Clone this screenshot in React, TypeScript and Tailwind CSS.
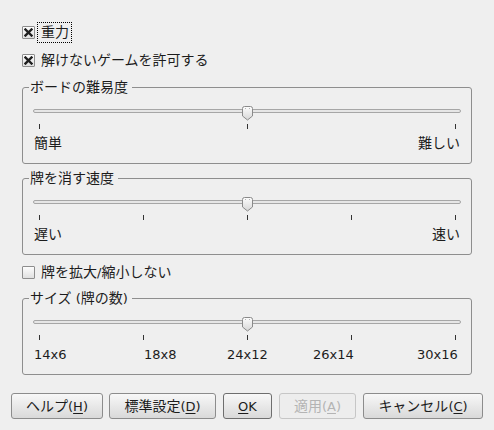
import React from 'react';

// CJK runs are set a pixel larger than the latin text, like the GTK dialog
const CJK = /([\u3000-\u30ff\u4e00-\u9fff\uff00-\uffef]+)/;

function T({ text }: { text: string }) {
  const parts = text.split(CJK);
  return (
    <>
      {parts.map((p, i) =>
        i % 2 === 1 ? (
          <span key={i} className="text-[14px]">
            {p}
          </span>
        ) : (
          <React.Fragment key={i}>{p}</React.Fragment>
        )
      )}
    </>
  );
}

function CheckBox({ checked }: { checked: boolean }) {
  return (
    <span className="flex h-[13px] w-[13px] shrink-0 items-center justify-center rounded-[1px] border border-[#8d8d8d] bg-linear-to-b from-[#fcfcfc] to-[#e0e0e0]">
      {checked && (
        <svg width="9" height="9" viewBox="0 0 9 9">
          <path d="M1.5 1.5 L7.5 7.5 M7.5 1.5 L1.5 7.5" stroke="#1e1e1e" strokeWidth="2.4" strokeLinecap="square" />
        </svg>
      )}
    </span>
  );
}

function CheckRow({ checked, label, focused }: { checked: boolean; label: string; focused?: boolean }) {
  return (
    <div className="flex h-[21px] items-center">
      <CheckBox checked={checked} />
      <span
        className={`ml-[2px] flex h-[21px] items-center border pl-[3px] pr-[2px] ${
          focused ? 'border-dotted border-black' : 'border-transparent'
        }`}
      >
        <T text={label} />
      </span>
    </div>
  );
}

function Thumb() {
  return (
    <svg width="11" height="15" viewBox="0 0 11 15" className="absolute left-[209px] top-[1px]">
      <defs>
        <linearGradient id="tg" x1="0" y1="0" x2="0" y2="1">
          <stop offset="0" stopColor="#fdfdfd" />
          <stop offset="1" stopColor="#d6d6d6" />
        </linearGradient>
      </defs>
      <path d="M0.5 2.5 Q0.5 0.5 2.5 0.5 H8.5 Q10.5 0.5 10.5 2.5 V10 L5.5 14 L0.5 10 Z" fill="url(#tg)" stroke="#8a8a8a" />
      <rect x="3" y="2" width="1" height="1" fill="#b5b5b5" />
      <rect x="7" y="2" width="1" height="1" fill="#b5b5b5" />
    </svg>
  );
}

function Slider({ ticks, labels }: { ticks: number; labels: React.ReactNode }) {
  return (
    <div className="px-[10px] pt-[9px]">
      <div className="relative h-[16px] pt-[4px]">
        <div className="h-[4px] rounded-full border border-[#a6a6a6] bg-[#e6e6e6]" />
        <Thumb />
      </div>
      <div className="mt-[3px] flex justify-between pl-[6px] pr-[5px]">
        {Array.from({ length: ticks }).map((_, i) => (
          <span key={i} className="h-[5px] w-px bg-[#333]" />
        ))}
      </div>
      {labels}
    </div>
  );
}

function Frame({ title, children }: { title: string; children: React.ReactNode }) {
  return (
    <fieldset className="rounded-[3px] border border-[#8e8e8e] px-[6px] pb-[11px]">
      <legend className="h-[17px] pl-[1px] pr-[4px] leading-[17px]">
        <T text={title} />
      </legend>
      <div className="-mx-[6px]">{children}</div>
    </fieldset>
  );
}

function Button({
  w,
  children,
  variant,
  className = '',
}: {
  w: string;
  children: React.ReactNode;
  variant?: 'default' | 'disabled';
  className?: string;
}) {
  const look =
    variant === 'disabled'
      ? 'border-[#c6c6c6] bg-[#ededed] text-[#b4b4b4]'
      : variant === 'default'
      ? 'border-[#6e6e6e] bg-linear-to-b from-[#f8f8f8] to-[#d9d9d9] text-[#1c1c1c]'
      : 'border-[#8c8c8c] bg-linear-to-b from-[#f8f8f8] to-[#d9d9d9] text-[#1c1c1c]';
  return (
    <div className={`flex h-[26px] items-center justify-center rounded-[3px] border leading-[17px] ${w} ${look} ${className}`}>
      {children}
    </div>
  );
}

function U({ c }: { c: string }) {
  return <span className="underline decoration-1 underline-offset-[2px]">{c}</span>;
}

export default function App() {
  return (
    <div className="h-[430px] w-[494px] bg-[#efefef] font-['DejaVu_Sans','Noto_Sans_CJK_JP',sans-serif] text-[13px] leading-[17px] text-[#1c1c1c]">
      <div className="px-[22px] pt-[22px]">
        <CheckRow checked label="重力" focused />
        <div className="mt-[7px]">
          <CheckRow checked label="解けないゲームを許可する" />
        </div>

        <div className="mt-[8px]">
          <Frame title="ボードの難易度">
            <Slider
              ticks={3}
              labels={
                <div className="mt-[6px] flex h-[17px] justify-between px-[1px]">
                  <T text="簡単" />
                  <T text="難しい" />
                </div>
              }
            />
          </Frame>
        </div>

        <div className="mt-[6px]">
          <Frame title="牌を消す速度">
            <Slider
              ticks={5}
              labels={
                <div className="mt-[6px] flex h-[17px] justify-between px-[1px]">
                  <T text="遅い" />
                  <T text="速い" />
                </div>
              }
            />
          </Frame>
        </div>

        <div className="mt-[7px]">
          <CheckRow checked={false} label="牌を拡大/縮小しない" />
        </div>

        <div className="mt-[7px]">
          <Frame title="サイズ (牌の数)">
            <Slider
              ticks={5}
              labels={
                <div className="mt-[6px] grid h-[17px] grid-cols-[110px_83px_86px_104px_1fr] pl-[1px]">
                  <span>14x6</span>
                  <span>18x8</span>
                  <span>24x12</span>
                  <span>26x14</span>
                  <span>30x16</span>
                </div>
              }
            />
          </Frame>
        </div>
      </div>

      <div className="mt-[18px] flex px-[11px]">
        <Button w="w-[92px]">
          <T text="ヘルプ" />(<U c="H" />)
        </Button>
        <Button w="w-[107px]" className="ml-[6px]">
          <T text="標準設定" />(<U c="D" />)
        </Button>
        <Button w="w-[49px]" variant="default" className="ml-[7px]">
          <U c="O" />K
        </Button>
        <Button w="w-[77px]" variant="disabled" className="ml-[7px]">
          <T text="適用" />(<U c="A" />)
        </Button>
        <Button w="w-[120px]" className="ml-[7px]">
          <T text="キャンセル" />(<U c="C" />)
        </Button>
      </div>
    </div>
  );
}
